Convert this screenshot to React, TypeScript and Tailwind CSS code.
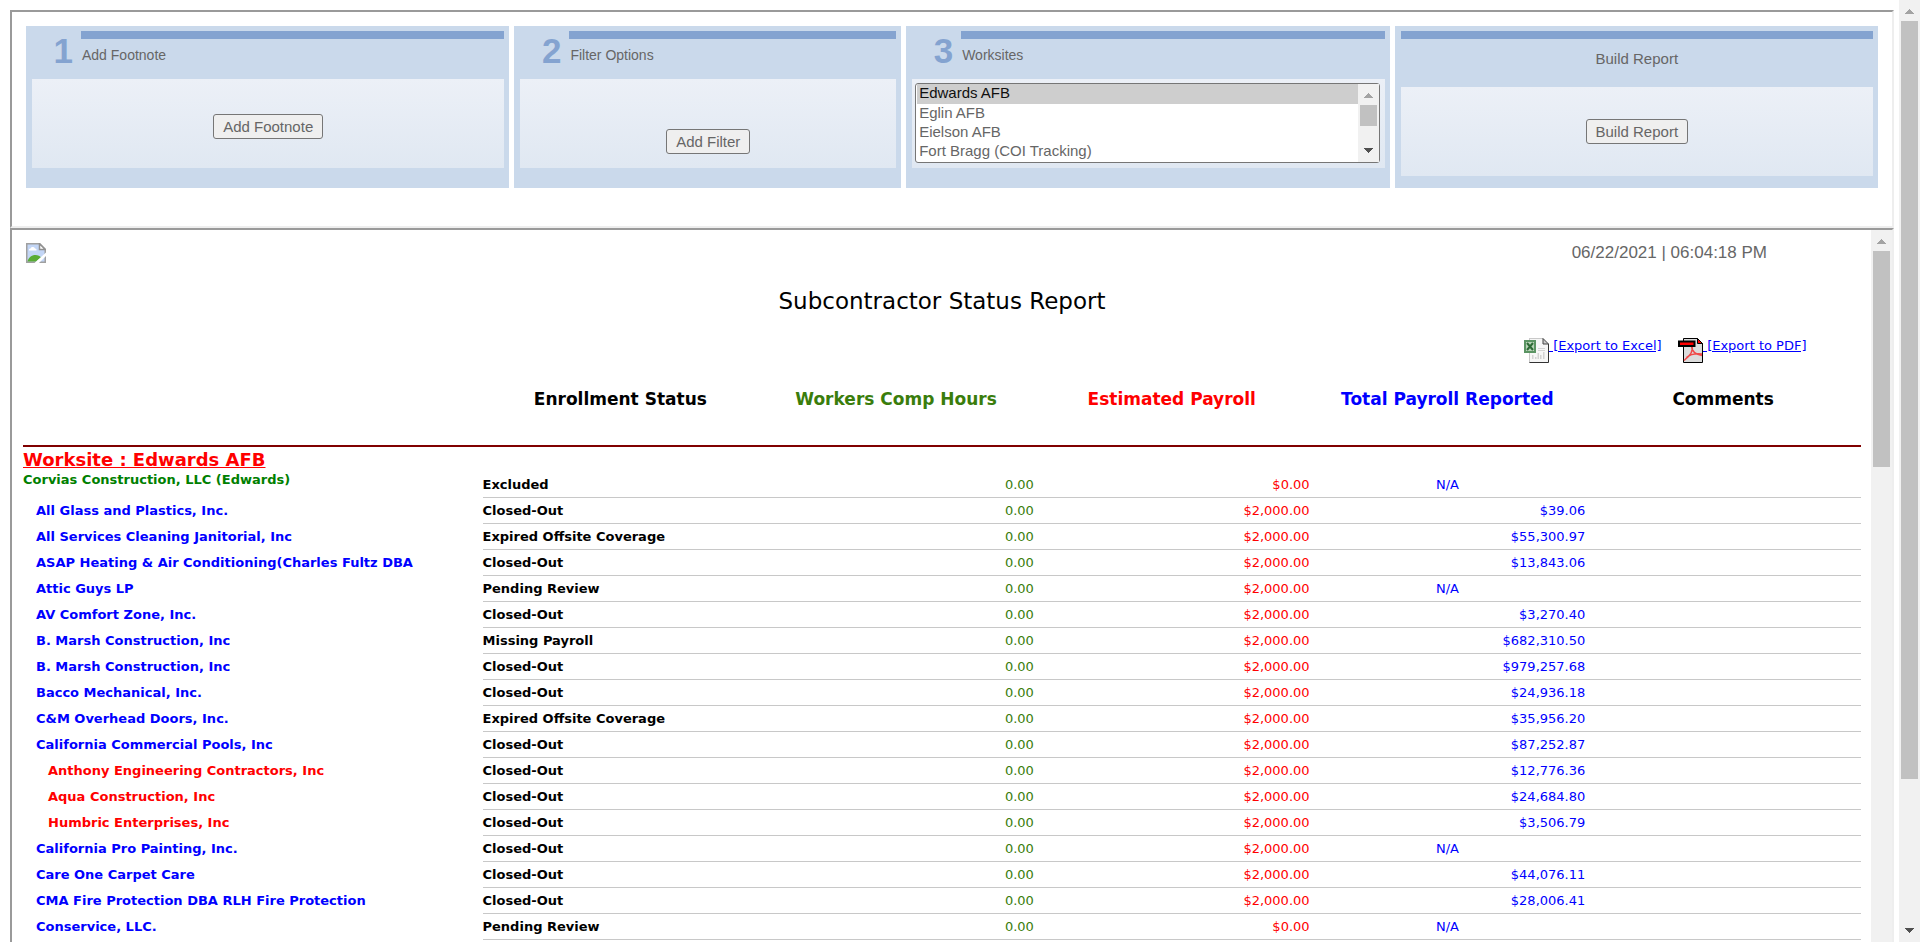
import React from "react";

type Level = 0 | 1 | 2;
type Row = { name: string; level: Level; status: string; hours: string; estimated: string; total: string };

const row = (name: string, level: Level, status: string, total: string, estimated = "$2,000.00"): Row => ({
  name,
  level,
  status,
  hours: "0.00",
  estimated,
  total,
});

const rows: Row[] = [
  row("Corvias Construction, LLC (Edwards)", 0, "Excluded", "N/A", "$0.00"),
  row("All Glass and Plastics, Inc.", 1, "Closed-Out", "$39.06"),
  row("All Services Cleaning Janitorial, Inc", 1, "Expired Offsite Coverage", "$55,300.97"),
  row("ASAP Heating & Air Conditioning(Charles Fultz DBA", 1, "Closed-Out", "$13,843.06"),
  row("Attic Guys LP", 1, "Pending Review", "N/A"),
  row("AV Comfort Zone, Inc.", 1, "Closed-Out", "$3,270.40"),
  row("B. Marsh Construction, Inc", 1, "Missing Payroll", "$682,310.50"),
  row("B. Marsh Construction, Inc", 1, "Closed-Out", "$979,257.68"),
  row("Bacco Mechanical, Inc.", 1, "Closed-Out", "$24,936.18"),
  row("C&M Overhead Doors, Inc.", 1, "Expired Offsite Coverage", "$35,956.20"),
  row("California Commercial Pools, Inc", 1, "Closed-Out", "$87,252.87"),
  row("Anthony Engineering Contractors, Inc", 2, "Closed-Out", "$12,776.36"),
  row("Aqua Construction, Inc", 2, "Closed-Out", "$24,684.80"),
  row("Humbric Enterprises, Inc", 2, "Closed-Out", "$3,506.79"),
  row("California Pro Painting, Inc.", 1, "Closed-Out", "N/A"),
  row("Care One Carpet Care", 1, "Closed-Out", "$44,076.11"),
  row("CMA Fire Protection DBA RLH Fire Protection", 1, "Closed-Out", "$28,006.41"),
  row("Conservice, LLC.", 1, "Pending Review", "N/A", "$0.00"),
];

const nameStyles = [
  "align-top text-[#008000]",
  "pl-[13px] align-middle text-[#0000ff]",
  "pl-[25px] align-middle text-[#ff0000]",
];

function Arrow({ down, dim }: { down?: boolean; dim?: boolean }) {
  return (
    <svg width="9" height="5" viewBox="0 0 9 5" shapeRendering="crispEdges" aria-hidden="true">
      <path d={down ? "M0 0h9L4.500 5z" : "M0 5h9L4.500 0z"} fill={dim ? "#a3a3a3" : "#505050"} />
    </svg>
  );
}

function ScrollBar({ thumb, showDown }: { thumb: string; showDown?: boolean }) {
  return (
    <div className="flex w-[21px] shrink-0 flex-col bg-[#f1f1f1]" aria-hidden="true">
      <div className="flex h-[21px] shrink-0 items-center justify-center pt-0.5">
        <Arrow dim />
      </div>
      <div className="min-h-0 grow px-0.5">
        <div className={"bg-[#c1c1c1] " + thumb} />
      </div>
      {showDown && (
        <div className="flex h-[21px] shrink-0 items-center justify-center pb-0.5">
          <Arrow down />
        </div>
      )}
    </div>
  );
}

const card = "flex h-[162px] min-w-0 flex-col bg-[#cad9eb] pt-[5px] pr-[5px] pl-1.5";

function Step({ number, title, children }: { number: string; title: string; children: React.ReactNode }) {
  return (
    <section className={card}>
      <div className="flex h-12 shrink-0">
        <div className="w-[49px] shrink-0 pr-2 text-right text-[35px] leading-10 font-bold text-[#84a3d0]">{number}</div>
        <div className="grow">
          <div className="h-2 bg-[#84a3d0]" />
          <h2 className="pt-1.5 pl-px text-[14px] leading-5">{title}</h2>
        </div>
      </div>
      {children}
    </section>
  );
}

const panel = "flex h-[89px] shrink-0 bg-linear-to-b from-[#ecf0f7] to-[#e0e8f2] ";
const button = "h-[25px] rounded-[3px] border border-[#767676] bg-[#efefef] px-[9px] text-[15px] leading-[22px]";

function BrokenImage() {
  return (
    <svg width="20" height="20" viewBox="0 0 20 20" role="img" aria-label="Company logo">
      <path d="M.75.750h13l5.500 5.500v13H.750z" fill="#c3d6f6" stroke="#a0a0a0" strokeWidth="1.500" />
      <path d="M13.500.750v5.750h5.750z" fill="#fff" stroke="#909090" strokeWidth="1.500" />
      <path d="M3 7.500h7.500a1.500 1.500 0 0 0-1.500-2 2.500 2.500 0 0 0-4.500 0A1.500 1.500 0 0 0 3 7.500z" fill="#fff" />
      <path d="M1.500 18.500c1-4 4-6.500 8-6.500 2.500 0 4.500 1 5.500 2.500l-5 4z" fill="#5aac35" />
      <path d="M8.500 20 20 9.500v3.500l-7 7z" fill="#fff" />
    </svg>
  );
}

function ExcelIcon() {
  return (
    <svg width="25" height="25" viewBox="0 0 25 25" className="shrink-0" aria-hidden="true">
      <path d="M5 0h14l6 6v19H5z" fill="#f6f6f6" />
      <path d="M5 .500h14M5.500 1v24" stroke="#c9c9c9" fill="none" />
      <path d="M24.500 6v18.500H5.500" stroke="#333" fill="none" />
      <path d="M19 .500 24.500 6H19z" fill="#ccc" stroke="#444" />
      <path d="M8 17h1.500v4H8zM11 19h1.500v2H11zM13.500 15H15v6h-1.500zM16 17h1.500v4H16zM19 14h1.500v7H19zM14 10h7v1h-7zM14 12h7v1h-7z" fill="#d2d2d2" />
      <rect x="0" y="2" width="12" height="13" fill="#5b9463" />
      <rect x="2" y="4" width="8" height="9" fill="#b9d3b8" />
      <path d="m3 5 6 7M9 5l-6 7" stroke="#2d6b36" strokeWidth="2" />
    </svg>
  );
}

function PdfIcon() {
  return (
    <svg width="25" height="25" viewBox="0 0 25 25" className="shrink-0" aria-hidden="true">
      <path d="M5.500.500h14l5 5v19h-19z" fill="#dcdcdc" stroke="#000" />
      <path d="M19.500.500v5h5z" fill="#f00" stroke="#000" />
      <path d="M14 8c1.500 4-1 9-8 14.500M13.500 8c0 4 3 8 10.500 9.500M8.500 19.500c4-3.500 10-4 15.500-3.500" stroke="#f04848" strokeWidth="1.500" fill="none" />
      <rect x="1" y="3.500" width="15.500" height="4.500" fill="#f00" stroke="#000" strokeWidth="2" />
    </svg>
  );
}

export default function App() {
  return (
    <div className="flex h-screen overflow-hidden bg-white font-['Liberation_Sans',Arial,sans-serif] text-[#666]">
      <div className="flex min-w-0 grow flex-col pt-2.5 pr-[5px] pl-2.5">
        <div className="h-[218px] shrink-0 border-2 border-t-[#9a9a9a] border-r-[#eee] border-b-[#eee] border-l-[#9a9a9a] px-3.5 pt-3.5">
          <div className="grid grid-cols-[5fr_4fr_5fr_5fr] gap-[5px]">
            <Step number="1" title="Add Footnote">
              <div className={panel + "items-center justify-center pt-1.5"}>
                <button type="button" className={button}>Add Footnote</button>
              </div>
            </Step>
            <Step number="2" title="Filter Options">
              <div className={panel + "items-end justify-center pb-3.5"}>
                <button type="button" className={button}>Add Filter</button>
              </div>
            </Step>
            <Step number="3" title="Worksites">
              <div className={panel + "items-start pt-1 pr-[5px] pl-[3px]"}>
                <div className="flex h-20 w-full rounded-[3px] border border-[#767676] bg-white pl-px">
                  <select
                    size={4}
                    defaultValue="Edwards AFB"
                    aria-label="Worksites"
                    className="min-w-0 grow appearance-none overflow-hidden text-[15px] leading-[19px] outline-none"
                  >
                    <option className="h-5 px-0.5">Edwards AFB</option>
                    <option className="h-[19px] px-0.5">Eglin AFB</option>
                    <option className="h-[19px] px-0.5">Eielson AFB</option>
                    <option className="h-[19px] px-0.5">Fort Bragg (COI Tracking)</option>
                  </select>
                  <ScrollBar thumb="h-[21px]" showDown />
                </div>
              </div>
            </Step>
            <section className={card}>
              <div className="h-2 shrink-0 bg-[#84a3d0]" />
              <h2 className="h-12 shrink-0 pt-2 text-center text-[15px] leading-6">Build Report</h2>
              <div className={panel + "items-center justify-center"}>
                <button type="button" className={button}>Build Report</button>
              </div>
            </section>
          </div>
        </div>

        <div className="flex min-h-0 grow border-t-2 border-r-2 border-l-2 border-t-[#9a9a9a] border-r-[#eee] border-l-[#9a9a9a]">
          <div className="min-w-0 grow overflow-hidden pr-2.5 pl-[11px] font-['DejaVu_Sans',Verdana,sans-serif] text-black">
            <div className="flex justify-between pt-[13px] pr-[94px] pl-[3px]">
              <BrokenImage />
              <time className="font-['Liberation_Sans',Arial,sans-serif] text-[17px] leading-5 text-[#666]">06/22/2021 | 06:04:18 PM</time>
            </div>
            <h1 className="pt-6 text-center text-[23px] leading-7">Subcontractor Status Report</h1>
            <div className="flex h-12 justify-end gap-[11px] pt-[23px] pr-[50px] text-[13px] leading-4 text-[#0000ff]">
              <a href="#excel" className="flex w-[143px]">
                <ExcelIcon />
                <span className="whitespace-pre underline"> [Export to Excel]</span>
              </a>
              <a href="#pdf" className="flex w-[133px]">
                <PdfIcon />
                <span className="whitespace-pre underline"> [Export to PDF]</span>
              </a>
            </div>
            <table className="w-full table-fixed border-separate border-spacing-0 text-[13px] leading-4">
              <colgroup>
                <col className="w-1/4" />
                <col className="w-[15%]" />
                <col className="w-[15%]" />
                <col className="w-[15%]" />
                <col className="w-[15%]" />
                <col className="w-[15%]" />
              </colgroup>
              <thead>
                <tr className="text-[17px] leading-5">
                  <td className="h-[84px] border-b-2 border-[#800000]" />
                  <th className="border-b-2 border-[#800000] pb-2.5">Enrollment Status</th>
                  <th className="border-b-2 border-[#800000] pb-2.5 text-[#3a7d0c]">Workers Comp Hours</th>
                  <th className="border-b-2 border-[#800000] pb-2.5 text-[#ff0000]">Estimated Payroll</th>
                  <th className="border-b-2 border-[#800000] pb-2.5 text-[#0000ff]">Total Payroll Reported</th>
                  <th className="border-b-2 border-[#800000] pb-2.5">Comments</th>
                </tr>
              </thead>
              <tbody>
                <tr>
                  <th colSpan={6} className="h-[25px] text-left text-[18px] leading-6 text-[#ff0000] underline">Worksite : Edwards AFB</th>
                </tr>
                {rows.map((r, i) => (
                  <tr key={i} className="h-[26px]">
                    <th className={"text-left whitespace-nowrap " + nameStyles[r.level]}>{r.name}</th>
                    <td className="border-b border-[#c8c8c8] font-bold">{r.status}</td>
                    <td className="border-b border-[#c8c8c8] text-right text-[#3a7d0c]">{r.hours}</td>
                    <td className="border-b border-[#c8c8c8] text-right text-[#ff0000]">{r.estimated}</td>
                    <td className={"border-b border-[#c8c8c8] text-[#0000ff] " + (r.total === "N/A" ? "text-center" : "text-right")}>{r.total}</td>
                    <td className="border-b border-[#c8c8c8]" />
                  </tr>
                ))}
              </tbody>
            </table>
          </div>
          <ScrollBar thumb="h-[216px]" />
        </div>
      </div>
      <ScrollBar thumb="h-[758px]" showDown />
    </div>
  );
}
